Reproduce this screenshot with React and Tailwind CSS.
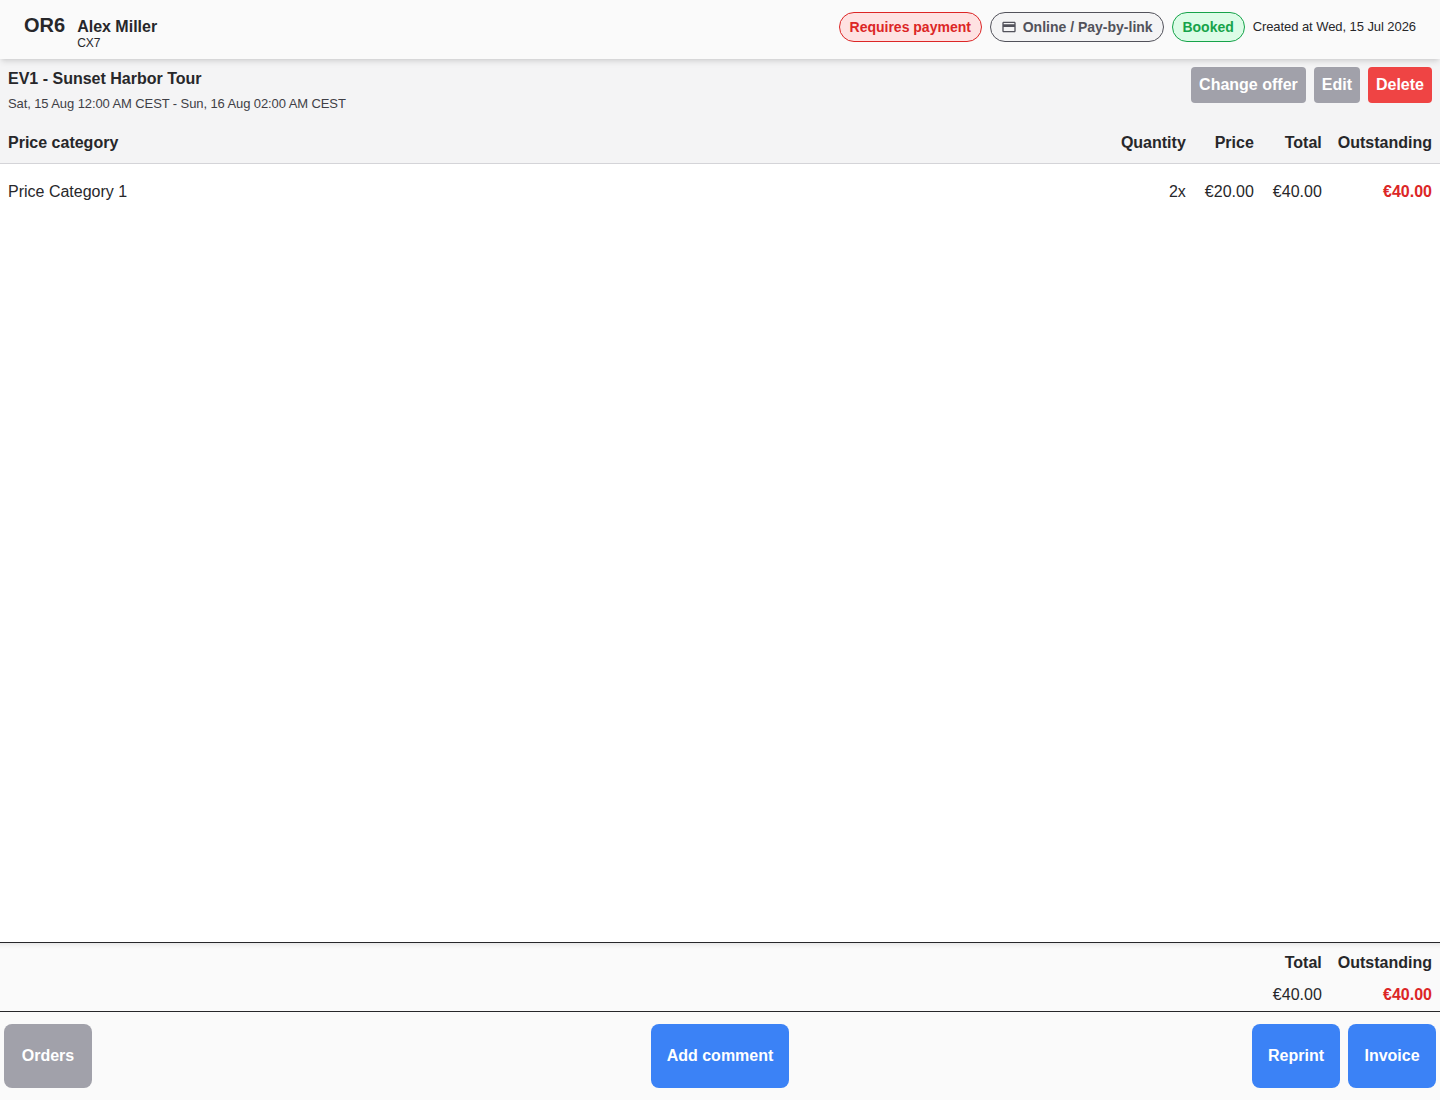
import React from 'react';

const btn = 'h-9 px-2 rounded text-base font-bold text-white';
const bigBtn = 'h-16 min-w-[88px] px-4 rounded-lg text-base font-bold text-white';
const th = 'px-2 pt-0.5 text-base font-bold whitespace-nowrap';
const td = 'px-2 pt-0.5 text-base whitespace-nowrap';

function CardIcon() {
  return (
    <svg width="16" height="16" viewBox="0 0 24 24" fill="currentColor" className="shrink-0">
      <path d="M20 4H4c-1.11 0-1.99.89-1.99 2L2 18c0 1.11.89 2 2 2h16c1.11 0 2-.89 2-2V6c0-1.11-.89-2-2-2zm0 14H4v-6h16v6zm0-10H4V6h16v2z" />
    </svg>
  );
}

export default function App() {
  return (
    <div className="flex flex-col h-screen bg-white text-[#27272a] font-['Liberation_Sans',Arial,sans-serif] overflow-hidden">
      {/* top bar */}
      <header className="relative z-10 flex items-start justify-between h-[59px] pt-3 px-6 bg-[#fafafa] shadow-md shrink-0">
        <div className="flex items-start gap-3 -mt-px">
          <span className="text-xl font-bold">OR6</span>
          <div className="flex flex-col pt-1.5">
            <span className="text-base font-bold leading-5">Alex Miller</span>
            <span className="text-xs leading-3.5 -mt-px">CX7</span>
          </div>
        </div>
        <div className="flex items-center gap-2">
          <span className="flex items-center justify-center w-[143px] h-[30px] rounded-full border border-[#dc2626] bg-[#fee2e2] text-[#dc2626] text-sm font-bold">Requires payment</span>
          <span className="flex items-center gap-1.5 h-[30px] px-2.5 rounded-full border border-[#52525b] bg-[#f4f4f5] text-[#52525b] text-sm font-bold">
            <CardIcon />
            Online / Pay-by-link
          </span>
          <span className="flex items-center justify-center w-[73px] h-[30px] rounded-full border border-[#16a34a] bg-[#dcfce7] text-[#16a34a] text-sm font-bold">Booked</span>
          <span className="text-[13px] tracking-[-0.07px]">Created at Wed, 15 Jul 2026</span>
        </div>
      </header>

      {/* offer */}
      <main className="flex-1 min-h-0">
        <div className="flex justify-between bg-[#f4f4f5] h-[62px] pt-2 px-2">
          <div>
            <div className="text-base font-bold leading-6">EV1 - Sunset Harbor Tour</div>
            <div className="text-[13px] tracking-[-0.1px] mt-[3px] leading-5 text-[#3f3f46]">Sat, 15 Aug 12:00 AM CEST - Sun, 16 Aug 02:00 AM CEST</div>
          </div>
          <div className="flex gap-2">
            <button className={`${btn} bg-[#a1a1aa]`}>Change offer</button>
            <button className={`${btn} bg-[#a1a1aa]`}>Edit</button>
            <button className={`${btn} bg-[#ef4444]`}>Delete</button>
          </div>
        </div>
        <table className="w-full border-collapse">
          <thead>
            <tr className="h-[42px] bg-[#f4f4f5] border-b border-[#d4d4d8]">
              <th className={`${th} text-left`}>Price category</th>
              <th className={`${th} text-right w-[81px]`}>Quantity</th>
              <th className={`${th} text-right w-[68px]`}>Price</th>
              <th className={`${th} text-right w-[68px]`}>Total</th>
              <th className={`${th} text-right w-[110px]`}>Outstanding</th>
            </tr>
          </thead>
          <tbody>
            <tr className="h-14">
              <td className={`${td} text-left`}>Price Category 1</td>
              <td className={`${td} text-right`}>2x</td>
              <td className={`${td} text-right`}>€20.00</td>
              <td className={`${td} text-right`}>€40.00</td>
              <td className={`${td} text-right font-bold text-[#dc2626]`}>€40.00</td>
            </tr>
          </tbody>
        </table>
      </main>

      {/* totals */}
      <div className="shrink-0 flex justify-end h-[70px] bg-[#fafafa] border-y border-[#27272a] shadow-[inset_0_7px_6px_-7px_rgba(0,0,0,0.15)]">
        <table className="border-collapse">
          <tbody>
            <tr className="h-[38px]">
              <td className={`${th} text-right w-[68px]`}>Total</td>
              <td className={`${th} text-right w-[110px]`}>Outstanding</td>
            </tr>
            <tr className="h-[30px] align-top">
              <td className={`${td} text-right`}>€40.00</td>
              <td className={`${td} text-right font-bold text-[#dc2626]`}>€40.00</td>
            </tr>
          </tbody>
        </table>
      </div>

      {/* actions */}
      <footer className="shrink-0 flex items-start h-[88px] px-1 pt-3 bg-[#fafafa]">
        <div className="flex-1">
          <button className={`${bigBtn} bg-[#a1a1aa]`}>Orders</button>
        </div>
        <button className={`${bigBtn} bg-[#3b82f6]`}>Add comment</button>
        <div className="flex-1 flex justify-end gap-2">
          <button className={`${bigBtn} bg-[#3b82f6]`}>Reprint</button>
          <button className={`${bigBtn} bg-[#3b82f6]`}>Invoice</button>
        </div>
      </footer>
    </div>
  );
}
